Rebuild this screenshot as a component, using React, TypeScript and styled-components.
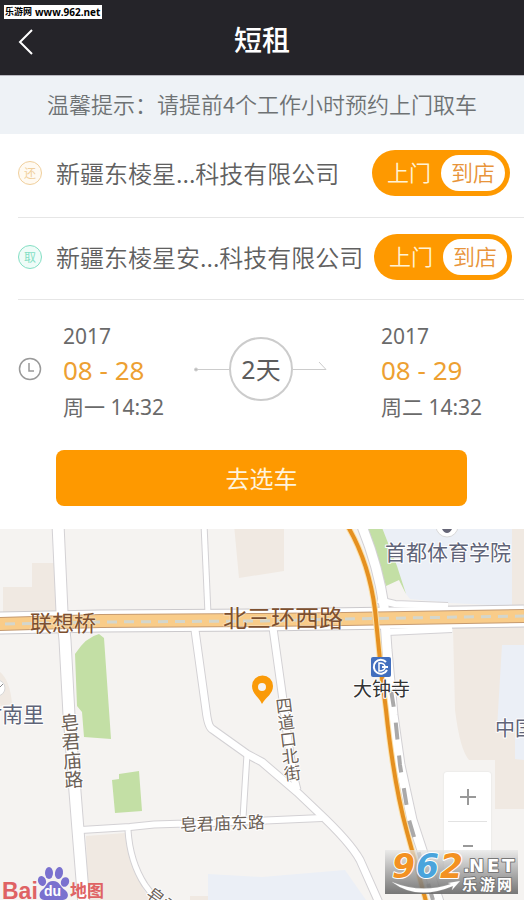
import React from "react";
import styled, { createGlobalStyle } from "styled-components";

const GlobalStyle = createGlobalStyle`
  * { box-sizing: border-box; }
  body {
    margin: 0;
    background: #fff;
    color: #6a6a6a;
    font-family: "Noto Sans", "Noto Sans CJK SC", sans-serif;
  }
  button, input { font: inherit; }
`;

const cjk = `"Noto Sans CJK SC", sans-serif`;
const mixed = `"Noto Sans", "Noto Sans CJK SC", sans-serif`;

const Page = styled.div`
  position: relative;
  overflow: hidden;
`;

const Header = styled.header`
  display: grid;
  grid-template-columns: 52px 1fr 52px;
  align-items: center;
  height: 76px;
  padding-top: 2px;
  background: #252429;
  border-bottom: 1px solid #b9b8c0;
  color: #fff;
`;

const BackButton = styled.button`
  display: flex;
  align-items: center;
  justify-content: center;
  height: 44px;
  padding: 6px 0 0;
  border: 0;
  background: none;
  color: #fff;
`;

const Title = styled.h1`
  margin: 0;
  text-align: center;
  font: 500 28px/40px ${cjk};
`;

const SiteTag = styled.div`
  position: absolute;
  top: 5px;
  left: 4px;
  display: flex;
  align-items: center;
  gap: 3px;
  width: 98px;
  height: 14px;
  padding-left: 1px;
  background: #fff;
  color: #000;
  font: 700 10px/14px "Open Sans", sans-serif;
  white-space: nowrap;
`;

const SiteName = styled.span`
  font: 700 9px/14px ${cjk};
`;

const Tip = styled.p`
  margin: 0;
  height: 58px;
  background: #eef2f6;
  color: #6e7274;
  text-align: center;
  font: 350 22px/54px ${cjk};
  white-space: nowrap;
`;

const PlaceRow = styled.div<{ $inset: number }>`
  display: flex;
  align-items: center;
  height: ${(p) => (p.$inset ? 82 : 84)}px;
  margin-left: 18px;
  padding-right: ${(p) => (p.$inset ? 12 : 14)}px;
  padding-bottom: ${(p) => (p.$inset ? 4 : 6)}px;
  border-bottom: 1px solid #e6e6e6;
`;

const Badge = styled.span<{ $color: string; $tint: string }>`
  flex: none;
  display: grid;
  place-items: center;
  width: 24px;
  height: 24px;
  margin-right: 14px;
  border: 1px solid ${(p) => p.$color};
  border-radius: 50%;
  background: ${(p) => p.$tint};
  color: ${(p) => p.$color};
  font: 400 12px/20px ${cjk};
`;

const PlaceName = styled.span`
  flex: 1;
  color: #606060;
  font: 350 24px/36px ${cjk};
  white-space: nowrap;
`;

const Switch = styled.fieldset`
  flex: none;
  display: grid;
  grid-template-columns: 1fr 64px;
  width: 138px;
  height: 46px;
  margin: 0;
  padding: 5px;
  border: 0;
  border-radius: 23px;
  background: #fe9900;
`;

const Choice = styled.label`
  position: relative;
  display: block;
  height: 36px;
  border-radius: 18px;
  text-align: center;
  color: #fff3d6;
  font: 350 22px/32px ${cjk};
  &:has(input:checked) {
    background: #fff;
    color: #e8943a;
  }
  input {
    position: absolute;
    inset: 0;
    margin: 0;
    opacity: 0;
  }
`;

const Period = styled.section`
  display: grid;
  grid-template-columns: 45px 131fr 134px 196fr;
  align-items: center;
  height: 150px;
  padding: 0 0 12px 18px;
`;

const When = styled.div<{ $end?: boolean }>`
  display: grid;
  padding-top: 8px;
  padding-left: ${(p) => (p.$end ? 53 : 0)}px;
  white-space: nowrap;
`;

const Year = styled.span`
  font-size: 21px;
  line-height: 32px;
`;

const Day = styled.span`
  color: #eda032;
  font-size: 26px;
  line-height: 36px;
`;

const Clock = styled.span`
  font: 400 21px/38px ${mixed};
`;

const Duration = styled.div`
  display: grid;
  grid-template-columns: 1fr 64px 1fr;
  align-items: center;
`;

const Days = styled.span`
  display: grid;
  place-items: center;
  width: 64px;
  height: 64px;
  border: 2px solid #ccc;
  border-radius: 50%;
  color: #5c5c5c;
  font: 400 25px/60px ${mixed};
`;

const SubmitArea = styled.div`
  padding: 0 57px 23px 56px;
`;

const Submit = styled.button`
  display: block;
  width: 100%;
  height: 56px;
  border: 0;
  border-radius: 8px;
  background: #fe9900;
  color: #fff3dc;
  font: 400 24px/52px ${cjk};
`;

const MapArea = styled.section`
  position: relative;
  overflow: hidden;
  background: #f5f3f1;
`;

const MapDrawing = styled.svg`
  display: block;
  width: 100%;
  height: auto;
  font-family: ${cjk};
`;

const VerticalName = styled.text`
  writing-mode: vertical-rl;
`;

const ZoomControl = styled.div`
  position: absolute;
  right: 33px;
  bottom: 30px;
  width: 47px;
  border-radius: 3px;
  background: #fff;
  box-shadow: 0 0 2px #ddd;
`;

const ZoomButton = styled.button`
  display: grid;
  place-items: center;
  width: 39px;
  height: 49px;
  margin: 0 4px;
  padding: 0;
  border: 0;
  background: none;
  color: #999;
  & + & { border-top: 1px solid #e2e2e2; }
`;

const Watermark = styled.div`
  position: absolute;
  right: 6px;
  bottom: 6px;
  width: 133px;
  height: 44px;
  background: linear-gradient(rgba(230, 230, 230, 0.7), rgba(105, 105, 105, 0.9));
`;

function Place({ mark, color, tint, name, inset }: {
  mark: string; color: string; tint: string; name: string; inset: number;
}) {
  return (
    <PlaceRow $inset={inset}>
      <Badge $color={color} $tint={tint}>{mark}</Badge>
      <PlaceName>{name}</PlaceName>
      <Switch aria-label={name}>
        <Choice><input type="radio" name={`mode-${mark}`} />上门</Choice>
        <Choice><input type="radio" name={`mode-${mark}`} defaultChecked />到店</Choice>
      </Switch>
    </PlaceRow>
  );
}

const streets = [
  { d: "M58 524 L62 612 L65 640 L69 715 L78 830 L84 905", w: 11 },
  { d: "M204 524 L208 614", w: 5 },
  { d: "M195 630 L206 710 Q208 727 212 729 L247 754 L262 762 L297 792 L318 812 Q350 842 360 860 L380 905", w: 7 },
  { d: "M273 628 L283 700 Q291 770 297 790", w: 7 },
  { d: "M247 754 L243 818", w: 5 },
  { d: "M81 830 L130 827 Q160 823 190 824 L322 818", w: 6 },
  { d: "M128 830 Q130 862 145 885 L160 905", w: 5 },
  { d: "M361 524 Q378 565 384 606 L387 650 L393 715 L400 765 L412 820 L440 905", w: 9 },
  { d: "M378 600 L395 604 L448 606", w: 6 },
  { d: "M387 632 L452 629", w: 6 },
];

const greens = [
  "M75 654 Q86 637 99 634 L104 638 L111 739 L84 737 L82 712 L77 706Z",
  "M112 780 L119 779 L119 774 L139 771 L142 811 L115 813Z",
  "M366 525 L381 525 L397 566 L406 594 L399 580 L386 586Z",
];

const beiges = [
  "M3 587 H32 V563 H54 L57 612 H3Z",
  "M234 525 H284 V571 L239 578Z",
  "M86 836 L125 833 Q128 865 150 900 H88Z",
  "M512 525 H524 V606 H512Z",
  "M453 628 L524 625 V809 H495 V760 H469 Q460 750 455 710Z",
  "M0 672 Q10 680 12 704 L0 706Z",
  "M190 896 H208 V900 H190Z",
];

const blues = [
  "M381 525 H512 V606 L450 603 L410 599 L406 594Z",
  "M502 645 H524 V760 L515 759 V728 H497Z",
  "M208 874 L262 877 L345 870 L366 900 H208Z",
];

function CityMap() {
  return (
    <MapDrawing viewBox="0 529 524 371" role="img" aria-label="地图">
      <rect x="0" y="529" width="524" height="371" fill="#f5f3f1" />
      {beiges.map((d) => <path key={d} d={d} fill="#f0e9e2" />)}
      {blues.map((d) => <path key={d} d={d} fill="#ebeff6" />)}
      {greens.map((d) => <path key={d} d={d} fill="#c3dfa5" />)}
      <g fill="none" strokeLinejoin="round">
        {streets.map((s) => <path key={s.d} d={s.d} stroke="#d3d1d4" strokeWidth={s.w + 2} />)}
        <path d="M-4 623 L100 621 L262 620 L524 616" stroke="#cbc9cc" strokeWidth="23" />
        {streets.map((s) => <path key={s.d} d={s.d} stroke="#fff" strokeWidth={s.w} />)}
        <path d="M-4 623 L100 621 L262 620 L524 616" stroke="#fff" strokeWidth="21" />
        <path d="M-4 624 L100 621 L262 620 L345 619 L524 616" stroke="#c59a70" strokeWidth="14" />
        <path d="M-4 624 L100 621 L262 620 L345 619 L524 616" stroke="#f9cc89" strokeWidth="12" />
        <path d="M5 624 L100 622 L262 621 L345 619 L524 616" stroke="#d3d6cd" strokeWidth="3" strokeDasharray="10 7" />
        <path d="M391 690 L395 715 L400 765 L409 820 L433 900" stroke="#aaa9a9" strokeWidth="4" strokeDasharray="17 16" />
        <path d="M347 525 Q369 562 375 610 L381 670 L386 710 Q394 785 407 832 L427 905" stroke="#fbe0a9" strokeWidth="6" />
        <path d="M347 525 Q369 562 375 610 L381 670 L386 710 Q394 785 407 832 L427 905" stroke="#e59020" strokeWidth="4" />
      </g>

      <circle cx="447" cy="526" r="11" fill="#fff" stroke="#d8d8d8" />
      <path d="M442 529 H452 Q450 533 447 533 Q444 533 442 529Z" fill="#667" />
      <circle cx="-3" cy="688" r="8" fill="#fff" stroke="#d8d8d8" />
      <path d="M0 687 L3 684" stroke="#888" />

      <g stroke="#fff" strokeWidth="2" paintOrder="stroke" strokeLinejoin="round">
        <g fill="#7d5030" strokeOpacity="0.3">
          <text x="30" y="631" fontSize="22">联想桥</text>
          <text x="223" y="627" fontSize="24">北三环西路</text>
        </g>
        <g fill="#5f6478">
          <text x="385" y="560" fontSize="21">首都体育学院</text>
          <text x="-19" y="722" fontSize="21">村南里</text>
          <text x="495" y="736" fontSize="20">中国</text>
        </g>
        <text x="353" y="696" fontSize="19" fill="#333">大钟寺</text>
        <g fill="#6c6157">
          <text x="180" y="831" fontSize="17" transform="rotate(-2 180 831)">皂君庙东路</text>
          <VerticalName x="69" y="713" fontSize="19" transform="rotate(-4 69 713)">皂君庙路</VerticalName>
          <VerticalName x="283" y="697" fontSize="17" transform="rotate(-7 283 697)">四道口北街</VerticalName>
          <text x="145" y="896" fontSize="17" transform="rotate(38 145 896)">皂君</text>
        </g>
      </g>

      <rect x="371" y="657" width="20" height="20" rx="2" fill="#426fbe" />
      <path d="M388 667 H382 M387 670 A7 7 0 1 1 386 662" fill="none" stroke="#fff" strokeWidth="2" />
      <path d="M379 663 V671 Q385 671 385 667 Q385 663 379 663Z" fill="none" stroke="#fff" strokeWidth="1.5" />

      <path fillRule="evenodd" fill="#fa9a08" d="M262 704 C259 697 252 694 252 686 A10 10 0 0 1 273 686 C273 694 266 697 262 704Z M262 683 A4 4 0 1 0 262 691 A4 4 0 1 0 262 683Z" />

      <g fontWeight="700">
        <text x="2" y="899" fontSize="23" fill="#df6264" fontFamily="Liberation Sans, sans-serif">Bai</text>
        <g fill="#7a71cf">
          <ellipse cx="42" cy="881" rx="4" ry="5" transform="rotate(-20 42 881)" />
          <ellipse cx="49" cy="873" rx="4" ry="6" />
          <ellipse cx="59" cy="873" rx="4" ry="6" transform="rotate(10 59 873)" />
          <ellipse cx="65" cy="882" rx="4" ry="5" transform="rotate(25 65 882)" />
          <path d="M53 881 C46 881 47 887 42 890 C37 895 40 901 47 900 H60 C67 901 71 895 65 890 C60 887 60 881 53 881Z" />
        </g>
        <text x="44" y="896" fontSize="14" fill="#fff" fontFamily="Liberation Sans, sans-serif">du</text>
        <text x="70" y="897" fontSize="17" fill="#df6264">地图</text>
      </g>
    </MapDrawing>
  );
}

export default function App() {
  return (
    <Page>
      <GlobalStyle />
      <Header>
        <BackButton aria-label="返回">
          <svg width="16" height="26" viewBox="0 0 16 26" fill="none" stroke="currentColor" strokeWidth="2">
            <path d="M14 1 L2 13 L14 25" />
          </svg>
        </BackButton>
        <Title>短租</Title>
      </Header>
      <SiteTag><SiteName>乐游网</SiteName>www.962.net</SiteTag>

      <Tip>温馨提示：请提前4个工作小时预约上门取车</Tip>
      <Place mark="还" color="#f0cf9c" tint="#fffaf2" name="新疆东棱星...科技有限公司" inset={0} />
      <Place mark="取" color="#84dfc4" tint="#effcf8" name="新疆东棱星安...科技有限公司" inset={2} />

      <Period>
        <svg width="24" height="24" viewBox="0 0 24 24" fill="none" stroke="#999">
          <circle cx="12" cy="12" r="10.5" strokeWidth="1.5" />
          <path d="M11 6 V14 H16" strokeWidth="1.5" />
        </svg>
        <When><Year>2017</Year><Day>08 - 28</Day><Clock>周一 14:32</Clock></When>
        <Duration>
          <svg width="35" height="20" viewBox="0 0 35 20" stroke="#ccc">
            <path d="M1 10.500 H35" /><circle cx="2" cy="10.500" r="1.500" fill="#bbb" />
          </svg>
          <Days>2天</Days>
          <svg width="35" height="20" viewBox="0 0 35 20" fill="none" stroke="#ccc">
            <path d="M0 10.500 H33 L26 3" />
          </svg>
        </Duration>
        <When $end><Year>2017</Year><Day>08 - 29</Day><Clock>周二 14:32</Clock></When>
      </Period>
      <SubmitArea><Submit>去选车</Submit></SubmitArea>

      <MapArea>
        <CityMap />
        <ZoomControl>
          <ZoomButton aria-label="放大">
            <svg width="18" height="18" viewBox="0 0 18 18" stroke="currentColor" strokeWidth="2"><path d="M1 9 H17 M9 1 V17" /></svg>
          </ZoomButton>
          <ZoomButton aria-label="缩小">
            <svg width="18" height="10" viewBox="0 0 18 10" stroke="currentColor" strokeWidth="2"><path d="M4 5 H14" /></svg>
          </ZoomButton>
        </ZoomControl>
        <Watermark>
          <svg width="133" height="44" viewBox="0 0 133 44" fontWeight="700" stroke="#fff" paintOrder="stroke" strokeLinejoin="round">
            <g fontSize="33" fontStyle="italic" strokeWidth="2" fontFamily="DejaVu Sans, sans-serif">
              <text x="7" y="28" fill="#f39122">9</text>
              <text x="31" y="28" fill="#4aa4dc">6</text>
              <text x="55" y="28" fill="#f39122">2</text>
            </g>
            <path d="M7 32 Q32 51 68 36 L67 40 L75 31 L63 33 L66 34 Q36 44 7 32Z" fill="#fff" stroke="#aaa" strokeWidth="0.5" />
            <g fill="#fff" stroke="#777" strokeWidth="2">
              <text y="22" fontSize="18" fontFamily="DejaVu Sans, sans-serif">
                <tspan x="78">.</tspan><tspan x="84">N</tspan><tspan x="102">E</tspan><tspan x="117">T</tspan>
              </text>
              <text y="40" fontSize="15" fontFamily="Noto Sans CJK SC, sans-serif">
                <tspan x="77">乐</tspan><tspan x="95">游</tspan><tspan x="112">网</tspan>
              </text>
            </g>
          </svg>
        </Watermark>
      </MapArea>
    </Page>
  );
}
